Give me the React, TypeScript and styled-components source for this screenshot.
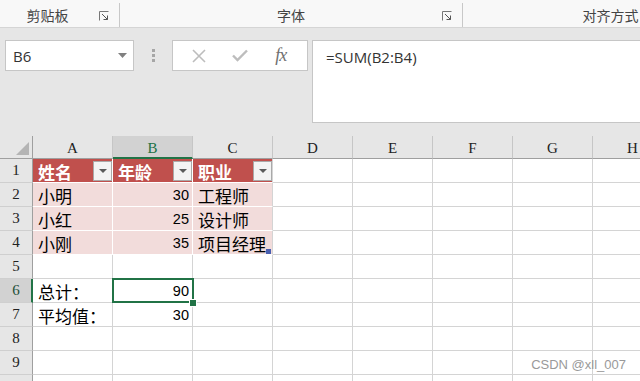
import styled, {createGlobalStyle, css} from "styled-components";
import {Fragment} from "react";

const GlobalStyle = createGlobalStyle`
  html, body {
    margin: 0;
    padding: 0;
    overflow: hidden;
    background: #e6e6e6;
  }
  body {
    font-family: "Liberation Sans", "Noto Sans CJK SC", sans-serif;
  }
`

const CJK = `"Liberation Serif", "Noto Sans CJK SC", serif`;
const GREEN = '#217346';
const GRID = '#d4d4d4';

const Page = styled.div`
  width: 640px;
  height: 381px;
  position: relative;
  overflow: hidden;
`

const Ribbon = styled.div`
  display: flex;
  height: 27px;
  background: #f8f8f8;
  border-bottom: 1px solid #d5d5d5;
  overflow: hidden;
`
const RibbonGroup = styled.div<{ $w: number }>`
  flex: 0 0 ${p => p.$w}px;
  position: relative;
  display: flex;
  align-items: center;
  justify-content: center;
  border-right: 1px solid #c8c8c8;
  box-sizing: border-box;
  height: 24px;
  margin-top: 3px;
`
const GroupLabel = styled.span<{ $shift?: number }>`
  font-family: "Noto Sans CJK SC", sans-serif;
  font-size: 14px;
  color: #444;
  margin-left: ${p => p.$shift || 0}px;
  margin-top: -1px;
`
const Launcher = styled.svg`
  position: absolute;
  right: 10px;
  top: 8px;
`

const FormulaArea = styled.div`
  display: flex;
  align-items: flex-start;
  height: 108px;
  box-sizing: border-box;
  padding: 12px 0 13px 5px;
`
const NameBox = styled.div`
  width: 129px;
  height: 31px;
  box-sizing: border-box;
  background: #fff;
  border: 1px solid #c6c6c6;
  display: flex;
  align-items: center;
  justify-content: space-between;
  padding: 0 6px 0 7px;
  font-family: "Open Sans", "Liberation Sans", sans-serif;
  font-size: 15px;
  color: #333;
`
const Grip = styled.div`
  width: 38px;
  height: 31px;
  display: flex;
  flex-direction: column;
  align-items: center;
  justify-content: center;
  gap: 2px;

  span {
    width: 3px;
    height: 3px;
    background: #a6a6a6;
  }
`
const FxButtons = styled.div`
  width: 136px;
  height: 31px;
  box-sizing: border-box;
  background: #fff;
  border: 1px solid #c6c6c6;
  display: flex;
  align-items: center;
  justify-content: space-around;
  padding: 0 6px;
`
const FxButton = styled.span`
  width: 30px;
  display: flex;
  justify-content: center;
  align-items: center;
`
const FxGlyph = styled.span`
  font-family: "Liberation Serif", serif;
  font-style: italic;
  font-size: 18px;
  color: #707070;
  letter-spacing: -1px;
`
const FormulaInput = styled.div`
  flex: 1;
  height: 83px;
  margin-left: 4px;
  margin-right: -2px;
  box-sizing: border-box;
  background: #fff;
  border: 1px solid #c6c6c6;
  padding: 6px 0 0 13px;
  font-family: "Open Sans", "Liberation Sans", sans-serif;
  font-size: 15px;
  color: #333;
`

const Sheet = styled.div`
  display: grid;
  grid-template-columns: 33px repeat(8, 80px);
  grid-template-rows: 23px repeat(10, 24px);
  background: #fff;
`
const Corner = styled.div`
  background: #e6e6e6;
  border-right: 1px solid #9f9f9f;
  border-bottom: 1px solid #9f9f9f;
  box-sizing: border-box;
  position: relative;

  &::after {
    content: "";
    position: absolute;
    right: 3px;
    bottom: 3px;
    border-style: solid;
    border-width: 0 0 13px 13px;
    border-color: transparent transparent #b4b4b4 transparent;
  }
`
const ColHeader = styled.div<{ $sel?: boolean }>`
  background: #e6e6e6;
  box-sizing: border-box;
  border-right: 1px solid #c6c6c6;
  border-bottom: 1px solid #9f9f9f;
  display: flex;
  align-items: center;
  justify-content: center;
  font-family: "Liberation Serif", serif;
  font-size: 15px;
  color: #222;
  padding-top: 2px;

  ${p => p.$sel && css`
    background: #d2d2d2;
    color: ${GREEN};
    border-bottom: 2px solid ${GREEN};
    padding-top: 3px;
  `}
`
const RowHeader = styled.div<{ $sel?: boolean }>`
  background: #e6e6e6;
  box-sizing: border-box;
  border-right: 1px solid #9f9f9f;
  border-bottom: 1px solid #cfcfcf;
  display: flex;
  align-items: center;
  justify-content: center;
  font-family: "Liberation Serif", serif;
  font-size: 15px;
  color: #222;

  ${p => p.$sel && css`
    background: #d2d2d2;
    color: #1d4f38;
    border-right: 2px solid ${GREEN};
    padding-left: 1px;
  `}
`

type Kind = 'head' | 'band' | 'plain';

const Cell = styled.div<{ $kind?: Kind; $right?: boolean; $last?: boolean; $sel?: boolean; $grip?: boolean }>`
  position: relative;
  box-sizing: border-box;
  border-right: 1px solid ${GRID};
  border-bottom: 1px solid ${GRID};
  display: flex;
  align-items: center;
  justify-content: ${p => p.$right ? 'flex-end' : 'space-between'};
  padding: 1px ${p => p.$right ? 3 : 0}px 0 5px;
  font-family: ${CJK};
  font-size: 17px;
  color: #000;
  white-space: nowrap;

  ${p => p.$kind === 'head' && css`
    background: #c0504d;
    color: #fff;
    font-weight: bold;
    border-color: #fff;
    padding-right: 0;
  `}
  ${p => p.$kind === 'band' && css`
    background: #f2dcdb;
    border-color: #fff;
  `}
  ${p => p.$last && css`
    border-right-color: ${GRID};
  `}
  ${p => p.$grip && css`
    &::after {
      content: "";
      position: absolute;
      right: 1px;
      bottom: 0;
      width: 5px;
      height: 5px;
      background: #4a5fb0;
    }
  `}
  ${p => p.$sel && css`
    z-index: 2;
    &::before {
      content: "";
      position: absolute;
      left: -1px;
      top: -1px;
      right: -2px;
      bottom: -1px;
      border: 2px solid ${GREEN};
    }
    &::after {
      content: "";
      position: absolute;
      right: -4px;
      bottom: -4px;
      width: 6px;
      height: 6px;
      background: ${GREEN};
      outline: 1px solid #fff;
    }
  `}
`
const Num = styled.span`
  font-family: "Liberation Sans", sans-serif;
  font-size: 14.5px;
`
const FilterButton = styled.span`
  width: 19px;
  height: 20px;
  box-sizing: border-box;
  background: #f3f3f3;
  border: 1px solid #a9a9a9;
  display: flex;
  align-items: center;
  justify-content: center;

  &::after {
    content: "";
    border-style: solid;
    border-width: 4px 4px 0 4px;
    border-color: #5a5a5a transparent transparent transparent;
  }
`
const Watermark = styled.div`
  position: absolute;
  right: 14px;
  bottom: 9px;
  font-family: "Liberation Sans", sans-serif;
  font-size: 13px;
  color: #8f8f8f;
  opacity: 0.9;
`

const cols = ['A', 'B', 'C', 'D', 'E', 'F', 'G', 'H'];

type CellData = { text?: string; num?: string; kind?: Kind; filter?: boolean };

const rows: CellData[][] = [
    [{text: '姓名', kind: 'head', filter: true}, {text: '年龄', kind: 'head', filter: true}, {text: '职业', kind: 'head', filter: true}],
    [{text: '小明', kind: 'band'}, {num: '30', kind: 'band'}, {text: '工程师', kind: 'band'}],
    [{text: '小红', kind: 'band'}, {num: '25', kind: 'band'}, {text: '设计师', kind: 'band'}],
    [{text: '小刚', kind: 'band'}, {num: '35', kind: 'band'}, {text: '项目经理', kind: 'band'}],
    [],
    [{text: '总计：'}, {num: '90'}],
    [{text: '平均值：'}, {num: '30'}],
    [],
    [],
    [],
];

function Launch() {
    return (
        <Launcher width="10" height="10" viewBox="0 0 10 10">
            <path d="M0.5 0.5 H9.5 M0.5 0.5 V9.5" stroke="#777" fill="none"/>
            <path d="M3 3 L8.5 8.5 M8.5 4.5 V8.5 H4.5" stroke="#555" fill="none"/>
        </Launcher>
    );
}

export default function App() {
    return (
        <Page>
            <GlobalStyle/>
            <Ribbon>
                <RibbonGroup $w={120}>
                    <GroupLabel $shift={-24}>剪贴板</GroupLabel>
                    <Launch/>
                </RibbonGroup>
                <RibbonGroup $w={343}>
                    <GroupLabel>字体</GroupLabel>
                    <Launch/>
                </RibbonGroup>
                <RibbonGroup $w={296}>
                    <GroupLabel>对齐方式</GroupLabel>
                </RibbonGroup>
            </Ribbon>
            <FormulaArea>
                <NameBox>
                    <span>B6</span>
                    <svg width="9" height="5" viewBox="0 0 9 5"><path d="M0 0 H9 L4.5 5 Z" fill="#808080"/></svg>
                </NameBox>
                <Grip><span/><span/><span/></Grip>
                <FxButtons>
                    <FxButton>
                        <svg width="14" height="14" viewBox="0 0 14 14">
                            <path d="M1 1 L13 13 M13 1 L1 13" stroke="#bdbdbd" strokeWidth="1.6"/>
                        </svg>
                    </FxButton>
                    <FxButton>
                        <svg width="16" height="13" viewBox="0 0 16 13">
                            <path d="M1 6.5 L5.5 11 L15 1.5" stroke="#bdbdbd" strokeWidth="2.4" fill="none"/>
                        </svg>
                    </FxButton>
                    <FxButton><FxGlyph>fx</FxGlyph></FxButton>
                </FxButtons>
                <FormulaInput>=SUM(B2:B4)</FormulaInput>
            </FormulaArea>
            <Sheet>
                <Corner/>
                {cols.map(c => <ColHeader key={c} $sel={c === 'B'}>{c}</ColHeader>)}
                {rows.map((row, r) => (
                    <Fragment key={r}>
                        <RowHeader $sel={r === 5}>{r < 9 ? r + 1 : ''}</RowHeader>
                        {cols.map((c, i) => {
                            const d = row[i] || {};
                            return (
                                <Cell
                                    key={c}
                                    $kind={d.kind || 'plain'}
                                    $right={!!d.num}
                                    $last={i === 2 && !!d.kind}
                                    $grip={r === 3 && i === 2}
                                    $sel={r === 5 && i === 1}
                                >
                                    {d.text && <span>{d.text}</span>}
                                    {d.num && <Num>{d.num}</Num>}
                                    {d.filter && <FilterButton/>}
                                </Cell>
                            );
                        })}
                    </Fragment>
                ))}
            </Sheet>
            <Watermark>CSDN @xll_007</Watermark>
        </Page>
    );
}
